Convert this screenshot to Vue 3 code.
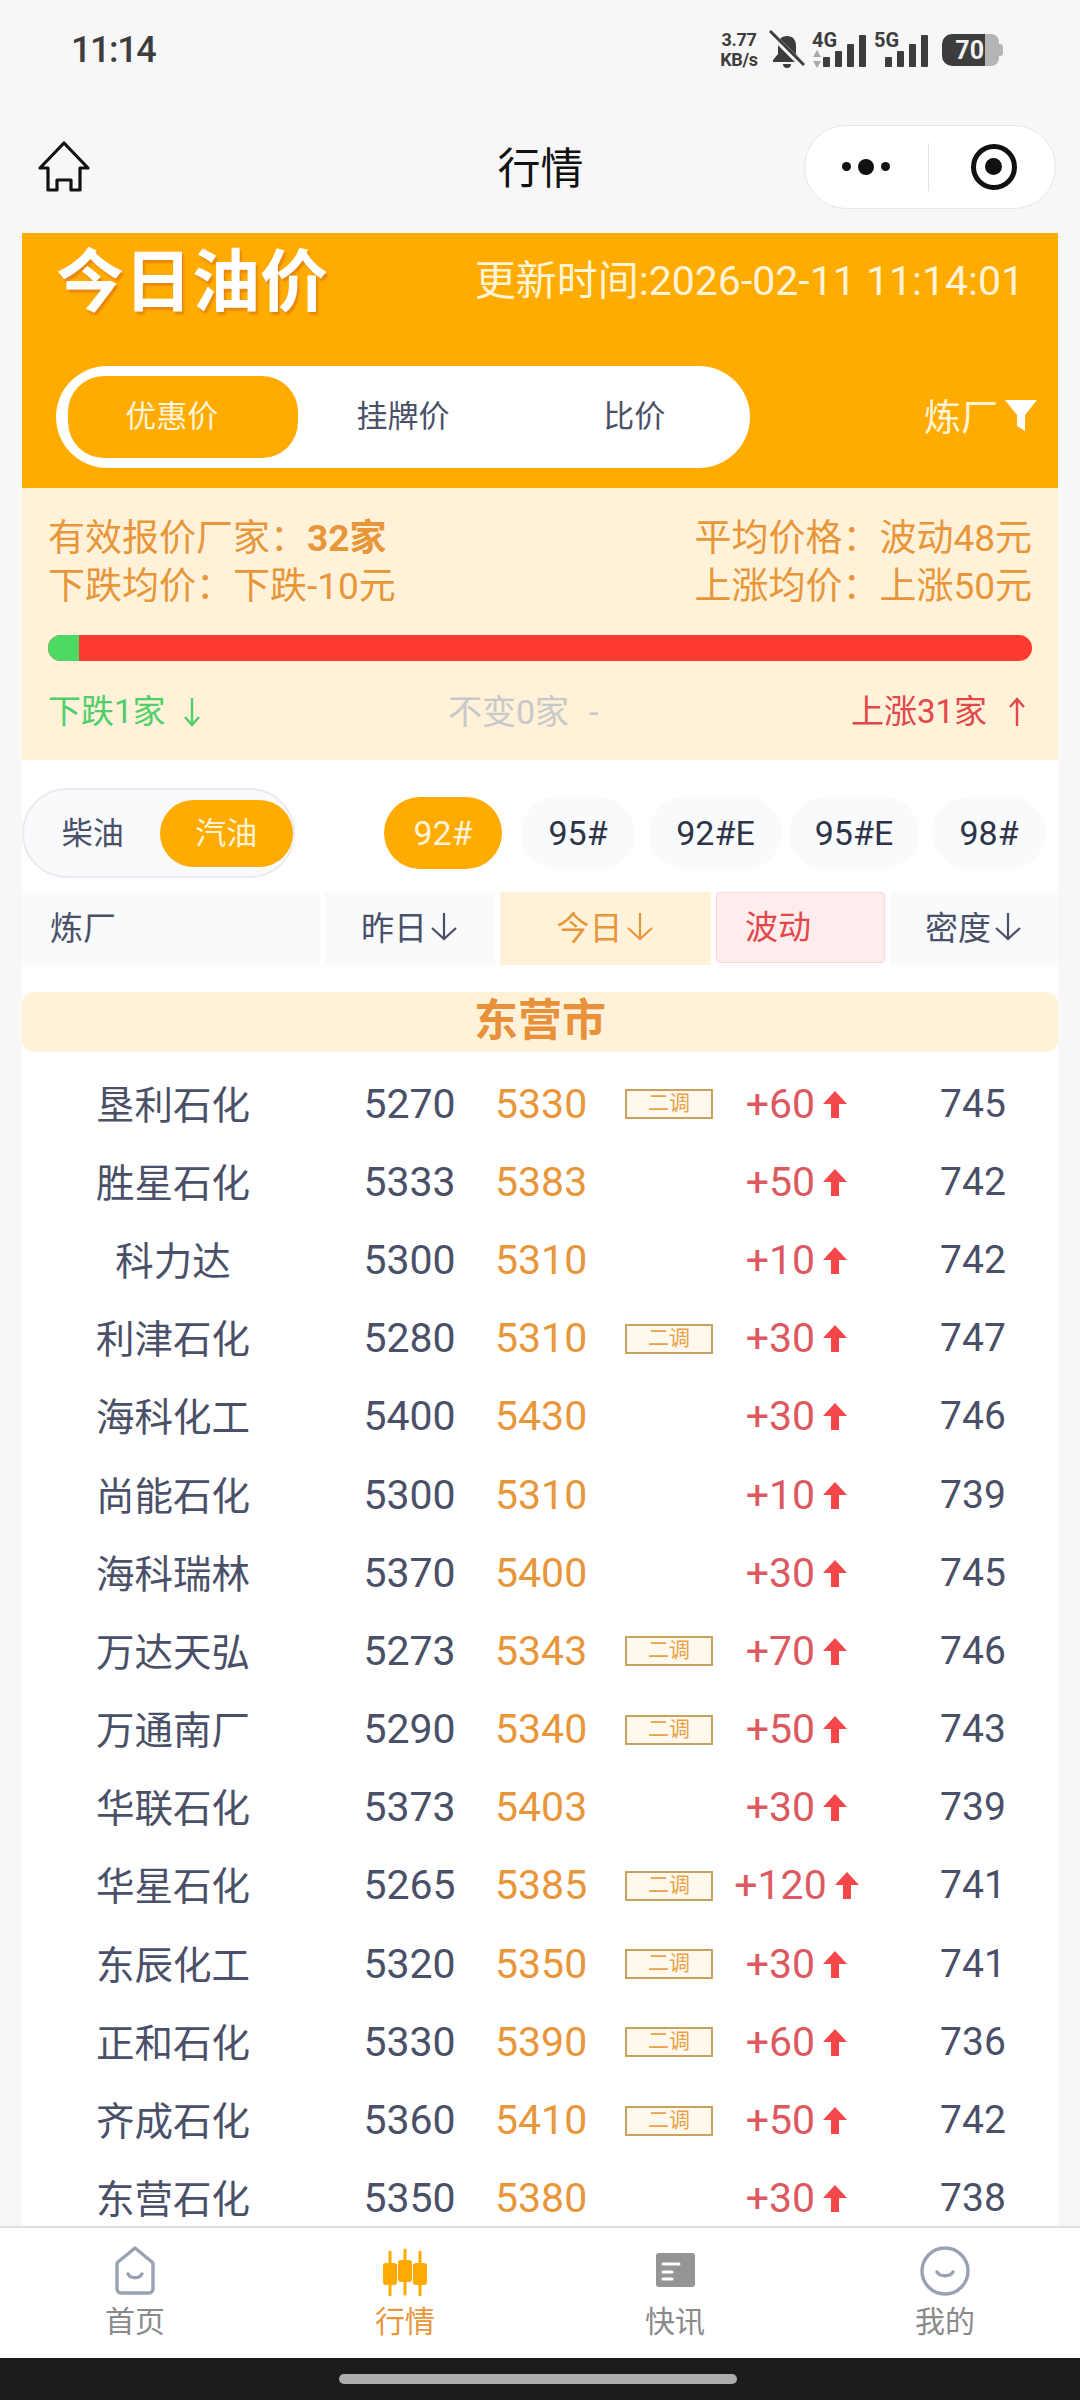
<template>
  <div class="page">
    <div class="status-bar">
      <span class="clock">11:14</span>
      <div class="status-icons">
        <div class="speed"><span>3.77</span><span>KB/s</span></div>
        <svg class="bell" viewBox="0 0 36 40" width="36" height="40">
          <path d="M18 6c-6 0-9 4-9 10v8l-5 6v2h28v-2l-5-6v-8c0-6-3-10-9-10z" fill="#3d3d3d" />
          <path d="M14 34h8a4 4 0 0 1-8 0z" fill="#3d3d3d" />
          <path d="M1 3l34 34" stroke="#f7f7f7" stroke-width="6" />
          <path d="M1 1l34 34" stroke="#3d3d3d" stroke-width="3" />
        </svg>
        <div class="signal">
          <span class="net">4G</span>
          <svg class="updown" viewBox="0 0 10 18" width="10" height="18">
            <path d="M5 0l4 7H1zM5 18l4-7H1z" fill="#aaa" />
          </svg>
          <div class="bars">
            <i style="height: 10px"></i><i style="height: 16px"></i><i style="height: 23px"></i><i style="height: 32px"></i>
          </div>
        </div>
        <div class="signal five">
          <span class="net">5G</span>
          <div class="bars">
            <i style="height: 10px"></i><i style="height: 16px"></i><i style="height: 23px"></i><i style="height: 32px"></i>
          </div>
        </div>
        <div class="battery">
          <div class="battery-fill"><span>70</span></div>
          <div class="battery-rest"></div>
          <div class="battery-tip"></div>
        </div>
      </div>
    </div>

    <div class="nav-bar">
      <svg class="home" viewBox="0 0 52 52" width="52" height="52">
        <path d="M26 2L50 27H42V49H33V39H19V49H10V27H2z" fill="none" stroke="#111" stroke-width="3.2" stroke-linejoin="round" />
      </svg>
      <span class="nav-title">行情</span>
      <div class="capsule">
        <div class="capsule-dots"><i></i><b></b><i></i></div>
        <div class="capsule-line"></div>
        <div class="capsule-target"><span></span></div>
      </div>
    </div>

    <div class="content">
      <section class="hero">
        <div class="hero-top">
          <h1>今日油价</h1>
          <span class="update-time">更新时间:2026-02-11 11:14:01</span>
        </div>
        <div class="hero-bottom">
          <div class="price-tabs">
            <span class="price-tab active">优惠价</span>
            <span class="price-tab">挂牌价</span>
            <span class="price-tab">比价</span>
          </div>
          <div class="refinery-filter">
            <span>炼厂</span>
            <svg viewBox="0 0 34 34" width="34" height="34">
              <path d="M1 2h32L21 17v16l-8-5V17z" fill="#fff" />
            </svg>
          </div>
        </div>
      </section>

      <section class="stats">
        <div class="stats-line">
          <span>有效报价厂家：<strong>32家</strong></span>
          <span>平均价格：波动48元</span>
        </div>
        <div class="stats-line">
          <span>下跌均价：下跌-10元</span>
          <span>上涨均价：上涨50元</span>
        </div>
        <div class="progress"><div class="progress-down"></div></div>
        <div class="trend-line">
          <span class="trend down">下跌1家
            <svg viewBox="0 0 20 32" width="20" height="32"><path d="M10 2v27M3 21l7 8 7-8" fill="none" stroke="currentColor" stroke-width="2.4" /></svg>
          </span>
          <span class="trend same">不变0家<em>-</em></span>
          <span class="trend up">上涨31家
            <svg viewBox="0 0 20 32" width="20" height="32"><path d="M10 30V3M3 11l7-8 7 8" fill="none" stroke="currentColor" stroke-width="2.4" /></svg>
          </span>
        </div>
      </section>

      <section class="table-area">
        <div class="filters">
          <div class="fuel-toggle">
            <span class="fuel">柴油</span>
            <span class="fuel active">汽油</span>
          </div>
          <div class="grades">
            <span
              v-for="grade in grades"
              :key="grade.label"
              :class="['grade', { active: grade.label === '92#' }]"
              :style="{ width: grade.width + 'px', marginLeft: grade.gap + 'px' }"
            >{{ grade.label }}</span>
          </div>
        </div>

        <div class="table-head">
          <div class="head-cell head-name">炼厂</div>
          <div class="head-cell head-yesterday">昨日
            <svg viewBox="0 0 30 30" width="30" height="30"><path d="M15 2v26M3 17l12 11 12-11" fill="none" stroke="currentColor" stroke-width="2.2" /></svg>
          </div>
          <div class="head-cell head-today">今日
            <svg viewBox="0 0 30 30" width="30" height="30"><path d="M15 2v26M3 17l12 11 12-11" fill="none" stroke="currentColor" stroke-width="2.2" /></svg>
          </div>
          <div class="head-cell head-change">波动</div>
          <div class="head-cell head-density">密度
            <svg viewBox="0 0 30 30" width="30" height="30"><path d="M15 2v26M3 17l12 11 12-11" fill="none" stroke="currentColor" stroke-width="2.2" /></svg>
          </div>
        </div>

        <div class="city">东营市</div>

        <div class="rows">
          <div v-for="row in rows" :key="row.name" class="row">
            <span class="cell-name">{{ row.name }}</span>
            <span class="cell-yesterday">{{ row.yesterday }}</span>
            <span class="cell-today">{{ row.today }}</span>
            <span class="cell-tag"><span v-if="row.second" class="tag">二调</span></span>
            <span class="cell-change">+{{ row.change }}
              <svg viewBox="0 0 24 28" width="24" height="28"><path d="M12 1L24 14h-8v14H8V14H0z" fill="#f4474a" /></svg>
            </span>
            <span class="cell-density">{{ row.density }}</span>
          </div>
        </div>
      </section>
    </div>

    <nav class="tab-bar">
      <div class="tab-item">
        <svg viewBox="0 0 50 50" width="50" height="50">
          <path d="M25 2L42 16a3 3 0 0 1 1 3v24a4 4 0 0 1-4 4H11a4 4 0 0 1-4-4V19a3 3 0 0 1 1-3z" fill="none" stroke="#98a2b3" stroke-width="3.4" stroke-linejoin="round" />
          <path d="M18 28c3 5 11 5 14 0" fill="none" stroke="#98a2b3" stroke-width="3.4" stroke-linecap="round" />
        </svg>
        <span>首页</span>
      </div>
      <div class="tab-item active">
        <svg viewBox="0 0 50 50" width="50" height="50">
          <path d="M10 6v44M25 4v44M40 6v44" stroke="#ffaa00" stroke-width="3" stroke-linecap="round" />
          <rect x="3" y="17" width="14" height="22" rx="3" fill="#ffaa00" />
          <rect x="18" y="14" width="14" height="22" rx="3" fill="#ffaa00" />
          <rect x="33" y="17" width="14" height="22" rx="3" fill="#ffaa00" />
        </svg>
        <span>行情</span>
      </div>
      <div class="tab-item">
        <svg viewBox="0 0 50 50" width="50" height="50">
          <rect x="6" y="7" width="39" height="34" rx="3" fill="#959595" />
          <path d="M13 18h16M13 26h9M13 33h9" stroke="#fff" stroke-width="3" stroke-linecap="round" />
        </svg>
        <span>快讯</span>
      </div>
      <div class="tab-item">
        <svg viewBox="0 0 50 50" width="50" height="50">
          <circle cx="25" cy="25" r="23" fill="none" stroke="#98a2b3" stroke-width="3.4" />
          <path d="M17 26c3 5 13 5 16 0" fill="none" stroke="#98a2b3" stroke-width="3.4" stroke-linecap="round" />
        </svg>
        <span>我的</span>
      </div>
    </nav>

    <div class="gesture-bar"><div class="gesture-handle"></div></div>
  </div>
</template>

<script setup>
const grades = [
  { label: '92#', width: 118, gap: 0 },
  { label: '95#', width: 114, gap: 19 },
  { label: '92#E', width: 133, gap: 14 },
  { label: '95#E', width: 130, gap: 7 },
  { label: '98#', width: 114, gap: 13 },
]

const rows = [
  { name: '垦利石化', yesterday: 5270, today: 5330, second: true, change: 60, density: 745 },
  { name: '胜星石化', yesterday: 5333, today: 5383, second: false, change: 50, density: 742 },
  { name: '科力达', yesterday: 5300, today: 5310, second: false, change: 10, density: 742 },
  { name: '利津石化', yesterday: 5280, today: 5310, second: true, change: 30, density: 747 },
  { name: '海科化工', yesterday: 5400, today: 5430, second: false, change: 30, density: 746 },
  { name: '尚能石化', yesterday: 5300, today: 5310, second: false, change: 10, density: 739 },
  { name: '海科瑞林', yesterday: 5370, today: 5400, second: false, change: 30, density: 745 },
  { name: '万达天弘', yesterday: 5273, today: 5343, second: true, change: 70, density: 746 },
  { name: '万通南厂', yesterday: 5290, today: 5340, second: true, change: 50, density: 743 },
  { name: '华联石化', yesterday: 5373, today: 5403, second: false, change: 30, density: 739 },
  { name: '华星石化', yesterday: 5265, today: 5385, second: true, change: 120, density: 741 },
  { name: '东辰化工', yesterday: 5320, today: 5350, second: true, change: 30, density: 741 },
  { name: '正和石化', yesterday: 5330, today: 5390, second: true, change: 60, density: 736 },
  { name: '齐成石化', yesterday: 5360, today: 5410, second: true, change: 50, density: 742 },
  { name: '东营石化', yesterday: 5350, today: 5380, second: false, change: 30, density: 738 },
]
</script>

<style>
html,
body {
  margin: 0;
  background: #f7f7f7;
}
</style>

<style scoped>
.page {
  display: flex;
  flex-direction: column;
  width: 1080px;
  height: 2400px;
  overflow: hidden;
  background: #f7f7f7;
  font-family: Roboto, "Noto Sans CJK SC", sans-serif;
}

.status-bar {
  display: flex;
  align-items: center;
  justify-content: space-between;
  flex: none;
  height: 100px;
  padding: 0 77px 0 71px;
  color: #3d3d3d;
}

.clock {
  font-size: 36px;
  font-weight: 500;
  letter-spacing: -1.4px;
}

.status-icons {
  display: flex;
  align-items: center;
  height: 40px;
}

.speed {
  display: flex;
  flex-direction: column;
  align-items: center;
  width: 44px;
  font-size: 18px;
  font-weight: 700;
  line-height: 20px;
  letter-spacing: -0.3px;
}

.bell {
  margin-left: 8px;
}

.signal {
  position: relative;
  width: 54px;
  height: 34px;
  margin-left: 7px;
}

.signal.five {
  width: 54px;
  margin-left: 8px;
}

.net {
  position: absolute;
  left: 0;
  top: -5px;
  font-size: 20px;
  font-weight: 700;
}

.updown {
  position: absolute;
  left: 0;
  bottom: -1px;
}

.bars {
  position: absolute;
  right: 0;
  bottom: 0;
  display: flex;
  align-items: flex-end;
  gap: 5px;
}

.bars i {
  display: block;
  width: 7px;
  border-radius: 1px;
  background: #3d3d3d;
}

.battery {
  display: flex;
  align-items: center;
  height: 32px;
  margin-left: 14px;
}

.battery-fill {
  display: flex;
  align-items: center;
  justify-content: flex-end;
  width: 43px;
  height: 32px;
  padding-right: 1px;
  box-sizing: border-box;
  border-radius: 10px 0 0 10px;
  background: #3d3d3d;
  color: #f2f2f2;
  font-size: 25px;
  font-weight: 700;
}

.battery-rest {
  width: 14px;
  height: 32px;
  border-radius: 0 8px 8px 0;
  background: #b5b5b5;
}

.battery-tip {
  width: 4px;
  height: 12px;
  border-radius: 0 3px 3px 0;
  background: #b5b5b5;
}

.nav-bar {
  display: grid;
  grid-template-columns: 1fr auto 1fr;
  align-items: center;
  flex: none;
  height: 133px;
  padding: 0 24px 0 25px;
}

.home {
  display: block;
  margin-left: 13px;
}

.nav-title {
  padding-top: 4px;
  color: #111;
  font-size: 43px;
  line-height: 50px;
}

.capsule {
  display: flex;
  align-items: center;
  justify-self: end;
  box-sizing: border-box;
  width: 252px;
  height: 84px;
  border: 1px solid #e6e6e6;
  border-radius: 42px;
  background: #fff;
}

.capsule-dots {
  display: flex;
  flex: 1;
  align-items: center;
  justify-content: center;
  gap: 7px;
}

.capsule-dots i {
  width: 9px;
  height: 9px;
  border-radius: 50%;
  background: #111;
}

.capsule-dots b {
  width: 16px;
  height: 16px;
  border-radius: 50%;
  background: #111;
}

.capsule-line {
  width: 1px;
  height: 48px;
  background: #e4e4e4;
}

.capsule-target {
  display: flex;
  flex: 1;
  align-items: center;
  justify-content: center;
  padding-left: 4px;
}

.capsule-target span {
  display: flex;
  align-items: center;
  justify-content: center;
  box-sizing: border-box;
  width: 46px;
  height: 46px;
  border: 5px solid #111;
  border-radius: 50%;
}

.capsule-target span::after {
  content: "";
  width: 17px;
  height: 17px;
  border-radius: 50%;
  background: #111;
}

.content {
  flex: 1;
  min-height: 0;
  margin: 0 22px;
  overflow: hidden;
  background: #fff;
}

.hero {
  box-sizing: border-box;
  height: 255px;
  padding: 0 20px 0 34px;
  background: #ffab00;
  color: #fff;
}

.hero-top {
  display: flex;
  align-items: center;
  justify-content: space-between;
  height: 133px;
  padding-bottom: 34px;
  box-sizing: border-box;
}

.hero-top h1 {
  margin: 0;
  font-size: 68px;
  font-weight: 700;
  line-height: 80px;
  letter-spacing: 0;
  text-shadow: 2px 3px 2px rgba(214, 111, 20, 0.6);
}

.update-time {
  margin-right: 14px;
  margin-bottom: 12px;
  font-size: 41px;
  color: #fff3d8;
  white-space: nowrap;
}

.hero-bottom {
  display: flex;
  align-items: center;
  justify-content: space-between;
}

.price-tabs {
  position: relative;
  display: flex;
  align-items: center;
  flex: none;
  box-sizing: border-box;
  width: 694px;
  height: 102px;
  border-radius: 51px;
  background: #fff;
}

.price-tabs::before {
  content: "";
  position: absolute;
  left: 12px;
  top: 10px;
  width: 230px;
  height: 82px;
  border-radius: 36px;
  background: #ffab00;
}

.price-tab {
  position: relative;
  flex: 1;
  color: #4a5068;
  font-size: 31px;
  line-height: 82px;
  text-align: center;
}

.price-tab.active {
  color: #fff3d8;
}

.refinery-filter {
  display: flex;
  align-items: center;
  gap: 6px;
  margin-top: -4px;
  color: #fff3d8;
  font-size: 37px;
}

.stats {
  box-sizing: border-box;
  height: 272px;
  padding: 27px 26px 0;
  background: #fff2d9;
  color: #e8963a;
  font-size: 37px;
  line-height: 48px;
}

.stats-line {
  display: flex;
  justify-content: space-between;
}

.stats-line strong {
  font-weight: 700;
}

.progress {
  height: 26px;
  margin-top: 24px;
  border-radius: 13px;
  overflow: hidden;
  background: #ff3b30;
}

.progress-down {
  width: 31px;
  height: 100%;
  background: #4cd964;
}

.trend-line {
  display: grid;
  grid-template-columns: 1fr 1fr 1fr;
  align-items: center;
  height: 50px;
  margin-top: 26px;
  font-size: 33px;
}

.trend {
  display: flex;
  align-items: center;
  gap: 16px;
}

.trend.down {
  color: #4fce6a;
}

.trend.same {
  justify-content: flex-start;
  padding-left: 72px;
  gap: 20px;
  color: #c8c8c8;
  font-size: 34px;
  white-space: nowrap;
}

.trend.same em {
  font-style: normal;
}

.trend.up {
  justify-content: flex-end;
  gap: 20px;
  padding-right: 5px;
  color: #e2474a;
}

.table-area {
  background: #fff;
}

.filters {
  display: flex;
  align-items: center;
  box-sizing: border-box;
  height: 132px;
  padding-top: 14px;
}

.fuel-toggle {
  display: flex;
  align-items: center;
  flex: none;
  box-sizing: border-box;
  width: 273px;
  height: 90px;
  padding-left: 2px;
  border: 2px solid #e8ecf2;
  border-radius: 45px;
  background: #f8fafc;
}

.fuel {
  width: 135px;
  height: 67px;
  border-radius: 34px;
  color: #4a5068;
  font-size: 31px;
  line-height: 67px;
  text-align: center;
}

.fuel.active {
  background: #ffab00;
  color: #fff3d8;
}

.grades {
  display: flex;
  margin-left: 89px;
}

.grade {
  height: 72px;
  border-radius: 36px;
  background: #f8fafc;
  color: #2e3448;
  font-size: 34px;
  line-height: 72px;
  text-align: center;
}

.grade.active {
  background: #ffab00;
  color: #fff3d8;
}

.table-head {
  display: flex;
  gap: 5px;
  height: 73px;
  color: #4a5068;
  font-size: 33px;
}

.head-cell {
  display: flex;
  align-items: center;
  justify-content: center;
  box-sizing: border-box;
  gap: 2px;
  padding-bottom: 6px;
  background: #f8fafc;
}

.head-name {
  justify-content: flex-start;
  width: 298px;
  padding-left: 28px;
}

.head-yesterday {
  width: 170px;
}

.head-today {
  width: 211px;
  background: #fff2d9;
  color: #e8963a;
}

.head-change {
  justify-content: flex-start;
  width: 169px;
  height: 71px;
  padding-left: 28px;
  border: 1px solid #fbd5d8;
  border-radius: 4px;
  background: #ffecec;
  color: #e2474a;
}

.head-density {
  flex: 1;
}

.city {
  height: 60px;
  margin-top: 27px;
  border-radius: 12px;
  background: #fff2d9;
  color: #e8903a;
  font-size: 44px;
  font-weight: 700;
  line-height: 58px;
  text-align: center;
}

.rows {
  padding-top: 12px;
}

.row {
  display: grid;
  grid-template-columns: 304px 172px 127px 92px 173px 168px;
  align-items: center;
  height: 78.2px;
  color: #4a5068;
  font-size: 41px;
}

.cell-name,
.cell-yesterday,
.cell-density {
  text-align: center;
}

.cell-name {
  padding-right: 2px;
  padding-bottom: 3px;
  font-size: 38.5px;
}

.cell-yesterday,
.cell-today,
.cell-change,
.cell-density {
  padding-top: 1px;
}

.cell-yesterday {
  padding-right: 5px;
}

.cell-density {
  font-size: 39px;
  padding-right: 2px;
}

.cell-today {
  margin-left: -3px;
  color: #e8963a;
}

.cell-tag {
  display: flex;
  padding-top: 2px;
}

.tag {
  box-sizing: border-box;
  width: 88px;
  height: 30px;
  border: 2px solid #c9a25f;
  background: #fff8ec;
  color: #e8a24a;
  font-size: 21px;
  line-height: 25px;
  text-align: center;
}

.cell-change {
  display: flex;
  align-items: center;
  justify-content: center;
  gap: 8px;
  padding-right: 14px;
  color: #dc5a5f;
}

.tab-bar {
  display: grid;
  grid-template-columns: repeat(4, 1fr);
  flex: none;
  box-sizing: border-box;
  height: 132px;
  padding-top: 18px;
  border-top: 2px solid #dedede;
  background: #fff;
}

.tab-item {
  display: flex;
  flex-direction: column;
  align-items: center;
  color: #8a8a8a;
  font-size: 30px;
  line-height: 38px;
}

.tab-item span {
  margin-top: 7px;
}

.tab-item.active {
  color: #e8963a;
}

.gesture-bar {
  display: flex;
  align-items: center;
  justify-content: center;
  flex: none;
  height: 42px;
  background: #1c1c1c;
}

.gesture-handle {
  width: 398px;
  height: 10px;
  margin-top: -1px;
  margin-left: -5px;
  border-radius: 5px;
  background: #adadad;
}
</style>
